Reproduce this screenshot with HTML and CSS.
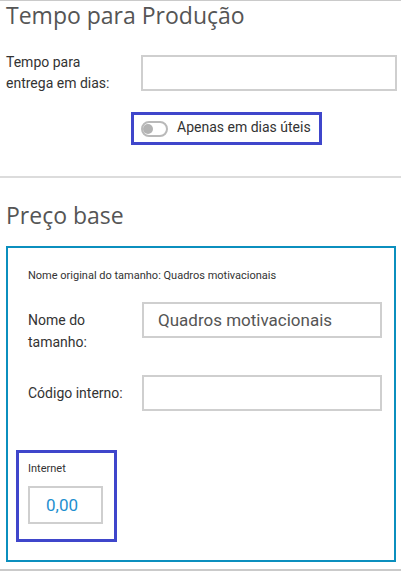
FILE: index.html
```html
<!DOCTYPE html>
<html lang="pt">
<head>
<meta charset="utf-8">
<link rel="stylesheet" href="styles.css">
</head>
<body>
<section class="sec sec-first">
  <h2 class="title title-1">Tempo para Produção</h2>
  <div class="row row-center">
    <label class="lbl">Tempo para<br>entrega em dias:</label>
    <input class="inp" type="text">
  </div>
  <div class="toggle-wrap">
    <span class="track"><span class="knob"></span></span>
    <span class="toggle-text">Apenas em dias úteis</span>
  </div>
</section>
<section class="sec sec-second">
  <h2 class="title title-2">Preço base</h2>
  <div class="box">
    <div class="orig">Nome original do tamanho: Quadros motivacionais</div>
    <div class="row box-row first-row">
      <label class="lbl lbl-pad">Nome do<br>tamanho:</label>
      <input class="inp inp-box" type="text" value="Quadros motivacionais">
    </div>
    <div class="row box-row second-row">
      <label class="lbl lbl-pad">Código interno:</label>
      <input class="inp inp-box" type="text">
    </div>
    <div class="price">
      <div class="price-lbl">Internet</div>
      <input class="price-inp" type="text" value="0,00">
    </div>
  </div>
  <div class="bottom-line"></div>
</section>
</body>
</html>
```
FILE: styles.css
```css
html, body {
  margin: 0;
  padding: 0;
  background: #fff;
}
body {
  font-family: Roboto, "Liberation Sans", sans-serif;
  color: #333;
  width: 401px;
  height: 572px;
  overflow: hidden;
}
.sec-first {
  border-top: 1px solid #cacaca;
  padding-bottom: 31px;
}
.title {
  font-family: "Open Sans", "Liberation Sans", sans-serif;
  font-weight: 400;
  font-size: 23px;
  line-height: 26px;
  color: #555;
  margin: 0;
  padding-left: 6px;
}
.title-1 {
  line-height: 29px;
}
.row {
  display: grid;
}
.row-center {
  grid-template-columns: 135px 256px;
  align-items: center;
  padding-left: 6px;
  margin-top: 22px;
}
.lbl {
  font-size: 14px;
  line-height: 21px;
  color: #333;
}
.inp {
  box-sizing: border-box;
  height: 36px;
  border: 2px solid #cfcfcf;
  background: #fff;
  margin: 0;
  outline: none;
  font-family: Roboto, "Liberation Sans", sans-serif;
}
.toggle-wrap {
  display: inline-flex;
  align-items: center;
  box-sizing: border-box;
  height: 33px;
  margin: 18px 0 0 131px;
  border: 3px solid #3f46cb;
  padding: 0 8px 0 7px;
  gap: 9px;
}
.track {
  position: relative;
  box-sizing: border-box;
  width: 27px;
  height: 16px;
  border: 2px solid #b9b9b9;
  border-radius: 8px;
  background: #fff;
}
.knob {
  position: absolute;
  left: 0;
  top: 1px;
  width: 10px;
  height: 10px;
  border-radius: 50%;
  background: #b3b3b3;
}
.toggle-text {
  font-size: 14px;
  line-height: 20px;
  color: #333;
  margin-top: -3px;
}
.sec-second {
  border-top: 2px solid #dcdcdc;
}
.title-2 {
  margin-top: 24px;
}
.box {
  margin: 18px 5px 0 6px;
  border: 2px solid #0b8fbe;
  padding: 21px 0 18px 0;
}
.orig {
  font-size: 11px;
  line-height: 13px;
  color: #333;
  padding-left: 20px;
}
.box-row {
  grid-template-columns: 114px 240px;
  align-items: start;
  padding-left: 20px;
}
.first-row {
  margin-top: 20px;
}
.second-row {
  margin-top: 22px;
}
.lbl-pad {
  line-height: 22px;
  padding-top: 7px;
}
.inp-box {
  font-size: 17px;
  color: #555;
  padding-left: 14px;
}
.price {
  box-sizing: border-box;
  width: 101px;
  margin: 39px 0 0 8px;
  border: 3px solid #3f46cb;
  padding: 9px 0 15px 9px;
}
.price-lbl {
  font-size: 11px;
  line-height: 13px;
  color: #333;
}
.price-inp {
  display: block;
  box-sizing: border-box;
  width: 75px;
  height: 38px;
  margin-top: 11px;
  border: 2px solid #cfcfcf;
  padding-left: 16px;
  font-family: Roboto, "Liberation Sans", sans-serif;
  font-size: 17px;
  color: #1f8fcf;
  outline: none;
}
.bottom-line {
  margin-top: 7px;
  border-top: 2px solid #cacaca;
}
```
